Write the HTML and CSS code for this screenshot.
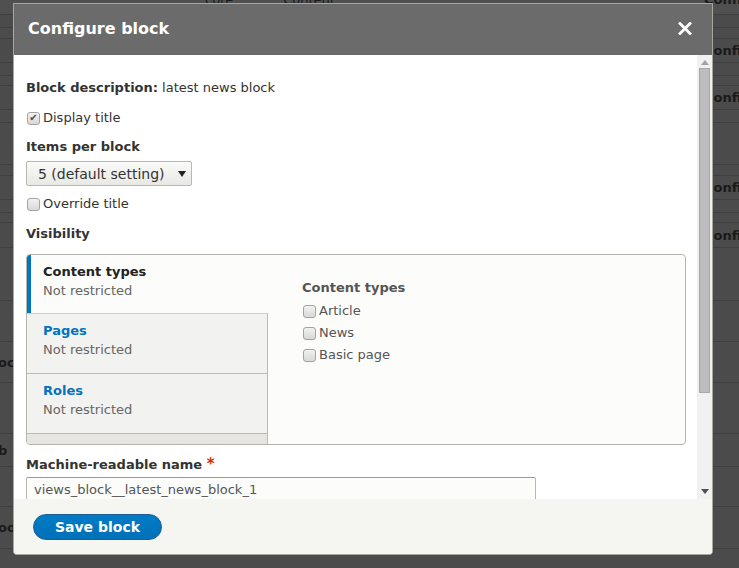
FILE: index.html
```html
<!DOCTYPE html>
<html>
<head>
<meta charset="utf-8">
<link rel="stylesheet" href="styles.css">
</head>
<body>
<div class="page">
  <div class="row h15 top"><span class="bg-core">core</span><span class="bg-content">Content</span><span class="bg-right">Confi</span></div>
  <div class="row h13"></div>
  <div class="row h11"></div>
  <div class="row h24"><span class="bg-right">Confi</span></div>
  <div class="row h13"></div>
  <div class="row h10"></div>
  <div class="row h24"><span class="bg-right">Confi</span></div>
  <div class="row h13"></div>
  <div class="row h42"></div>
  <div class="row h11"></div>
  <div class="row h24"><span class="bg-right">Confi</span></div>
  <div class="row h13"></div>
  <div class="row h10"></div>
  <div class="row h25"><span class="bg-right">Confi</span></div>
  <div class="row h53"></div>
  <div class="row h41"></div>
  <div class="row h41"><span class="bg-left">ock</span></div>
  <div class="row h51"></div>
  <div class="row h33"><span class="bg-left">b</span></div>
  <div class="row h40"></div>
  <div class="row h42"><span class="bg-left">oot</span></div>
</div>

<div class="dialog">
  <div class="titlebar">
    <span class="title">Configure block</span>
    <svg class="close" width="14" height="13" viewBox="0 0 14 13"><path d="M2 1.5 L12 11.5 M12 1.5 L2 11.5" stroke="#fff" stroke-width="2.8" stroke-linecap="square"/></svg>
  </div>
  <div class="body">
    <div class="content">
      <p class="desc"><b>Block description:</b> latest news block</p>
      <div class="check first"><span class="box checked">&#10004;</span><span>Display title</span></div>
      <div class="label items">Items per block</div>
      <div class="select"><span>5 (default setting)</span><span class="caret"></span></div>
      <div class="check override"><span class="box"></span><span>Override title</span></div>
      <div class="label vis">Visibility</div>
      <div class="vtabs">
        <div class="menu">
          <div class="tab active"><div class="tab-title">Content types</div><div class="tab-sum">Not restricted</div></div>
          <div class="tab"><div class="tab-title link">Pages</div><div class="tab-sum">Not restricted</div></div>
          <div class="tab"><div class="tab-title link">Roles</div><div class="tab-sum">Not restricted</div></div>
        </div>
        <div class="pane">
          <div class="pane-head">Content types</div>
          <div class="pane-list">
            <div class="check"><span class="box"></span><span>Article</span></div>
            <div class="check"><span class="box"></span><span>News</span></div>
            <div class="check"><span class="box"></span><span>Basic page</span></div>
          </div>
        </div>
      </div>
      <div class="label mr">Machine-readable name <span class="req">*</span></div>
      <div class="input">views_block__latest_news_block_1</div>
    </div>
    <div class="scrollbar">
      <span class="arr up"></span>
      <div class="track"><div class="thumb"></div></div>
      <span class="arr down"></span>
    </div>
  </div>
  <div class="footer">
    <button class="btn">Save block</button>
  </div>
</div>
</body>
</html>
```
FILE: styles.css
```css
html, body {
  margin: 0;
  padding: 0;
}
body {
  width: 739px;
  height: 568px;
  overflow: hidden;
  background: #4b4b4b;
  font-family: "DejaVu Sans", Verdana, sans-serif;
  font-size: 13px;
  color: #333;
  position: relative;
}

/* dimmed page behind the dialog */
.page {
  display: flex;
  flex-direction: column;
}
.row {
  box-sizing: border-box;
  display: flex;
  align-items: center;
  border-bottom: 1px solid #3f3f3f;
  position: relative;
  font-weight: bold;
  color: #1a1a1a;
  white-space: nowrap;
}
.h10 { height: 10px; }
.h11 { height: 11px; }
.h13 { height: 13px; }
.h15 { height: 15px; }
.h24 { height: 24px; }
.h25 { height: 25px; }
.h33 { height: 33px; }
.h40 { height: 40px; }
.h41 { height: 41px; }
.h42 { height: 42px; }
.h51 { height: 51px; }
.h53 { height: 53px; }
.top {
  align-items: flex-start;
  background: #505050;
}
.top span {
  margin-top: -8px;
}
.bg-core {
  margin-left: 205px;
  font-weight: normal;
}
.bg-content {
  margin-left: 50px;
  font-weight: normal;
}
.bg-right {
  margin-left: auto;
  width: 35px;
  overflow: hidden;
}
.bg-left {
  margin-left: -2px;
}

/* dialog */
.dialog {
  position: absolute;
  left: 13px;
  top: 3px;
  width: 700px;
  height: 552px;
  box-sizing: border-box;
  border: 1px solid #a7a7a0;
  border-radius: 0 0 4px 4px;
  background: #fff;
  display: flex;
  flex-direction: column;
  overflow: hidden;
}
.titlebar {
  height: 51px;
  flex: none;
  background: #6b6b6b;
  display: flex;
  align-items: center;
  justify-content: space-between;
  padding: 0 20px 0 14px;
}
.title {
  color: #fff;
  font-weight: bold;
  font-size: 16px;
  margin-top: -2px;
}
.close {
  display: block;
  margin-top: -2px;
}

.body {
  flex: 1;
  display: flex;
  min-height: 0;
}
.content {
  flex: 1;
  overflow: hidden;
  padding: 24px 11px 0 12px;
}
.desc {
  margin: 0;
  line-height: 18px;
}
.desc b {
  color: #333;
}
.check {
  display: flex;
  align-items: center;
  height: 18px;
  line-height: 18px;
}
.box {
  box-sizing: border-box;
  width: 13px;
  height: 13px;
  margin: 0 3px 0 1px;
  border: 1px solid #a3a3a3;
  border-radius: 3px;
  background: linear-gradient(#f2f2f2, #d8d8d8);
  display: flex;
  align-items: center;
  justify-content: center;
  font-size: 10px;
  line-height: 10px;
  color: #4a4a4a;
  flex: none;
}
.first { margin-top: 12px; }
.label {
  font-weight: bold;
  line-height: 18px;
  color: #333;
}
.items { margin-top: 11px; }
.select {
  box-sizing: border-box;
  margin-top: 5px;
  width: 166px;
  height: 25px;
  border: 1px solid #b8b8b2;
  border-radius: 2px;
  background: linear-gradient(#fafaf8, #e8e8e4);
  display: flex;
  align-items: center;
  padding-left: 11px;
  font-size: 14px;
  color: #333;
}
.caret {
  margin-left: auto;
  margin-right: 5px;
  width: 0;
  height: 0;
  border-left: 4.5px solid transparent;
  border-right: 4.5px solid transparent;
  border-top: 6px solid #222;
}
.override { margin-top: 9px; }
.vis { margin-top: 12px; }

.vtabs {
  box-sizing: border-box;
  margin-top: 11px;
  height: 191px;
  border: 1px solid #b5b5af;
  border-radius: 4px;
  background: #fcfcfa;
  display: flex;
  overflow: hidden;
}
.menu {
  width: 241px;
  flex: none;
  box-sizing: border-box;
  background: #e6e5e1;
  border-right: 1px solid #bcbcb6;
}
.tab {
  box-sizing: border-box;
  height: 60px;
  padding: 8px 10px 0 16px;
  background: #f2f2f0;
  border-bottom: 1px solid #bcbcb6;
  line-height: 18px;
}
.tab.active {
  height: 59px;
  background: #fcfcfa;
  box-shadow: inset 4px 0 0 #0074bd;
  margin-right: -1px;
  border-bottom-color: #cfcfca;
}
.tab-title {
  font-weight: bold;
  color: #222;
}
.tab-title.link {
  color: #0074bd;
}
.tab-sum {
  color: #666;
  line-height: 20px;
}
.pane {
  flex: 1;
  padding: 24px 20px 0 34px;
}
.pane-head {
  font-weight: bold;
  color: #555;
  line-height: 18px;
}
.pane-list {
  margin-top: 5px;
  display: flex;
  flex-direction: column;
  gap: 4px;
  color: #555;
}
.pane-list .box {
  margin-left: 1px;
}
.mr { margin-top: 10px; }
.req {
  color: #e32700;
  font-size: 15px;
}
.input {
  box-sizing: border-box;
  margin-top: 3px;
  width: 510px;
  height: 30px;
  border: 1px solid #b8b8b2;
  border-top-color: #999;
  border-radius: 2px;
  background: #fcfcfa;
  padding: 3px 7px;
  line-height: 18px;
  color: #555;
}

/* scrollbar */
.scrollbar {
  width: 15px;
  flex: none;
  background: #f1f1f1;
  display: flex;
  flex-direction: column;
  align-items: center;
}
.arr {
  width: 0;
  height: 0;
  border-left: 4px solid transparent;
  border-right: 4px solid transparent;
  flex: none;
}
.arr.up {
  margin-top: 5px;
  border-bottom: 5px solid #a3a3a3;
}
.arr.down {
  margin-bottom: 5px;
  border-top: 5px solid #505050;
}
.track {
  flex: 1;
  width: 100%;
  padding: 3px 2px 0;
  box-sizing: border-box;
}
.thumb {
  box-sizing: border-box;
  height: 325px;
  border: 1px solid #a8a8a8;
  background: #bdbdbd;
}

/* footer */
.footer {
  flex: none;
  height: 55px;
  background: #f5f5f2;
  padding: 15px 0 0 19px;
  box-sizing: border-box;
}
.btn {
  display: block;
  width: 129px;
  height: 26px;
  border: 1px solid #1e5c90;
  border-radius: 13px;
  background: linear-gradient(#007bc6, #0071b8);
  color: #fff;
  font-family: "DejaVu Sans", Verdana, sans-serif;
  font-weight: bold;
  font-size: 14px;
  padding: 0;
  line-height: 24px;
}
```
